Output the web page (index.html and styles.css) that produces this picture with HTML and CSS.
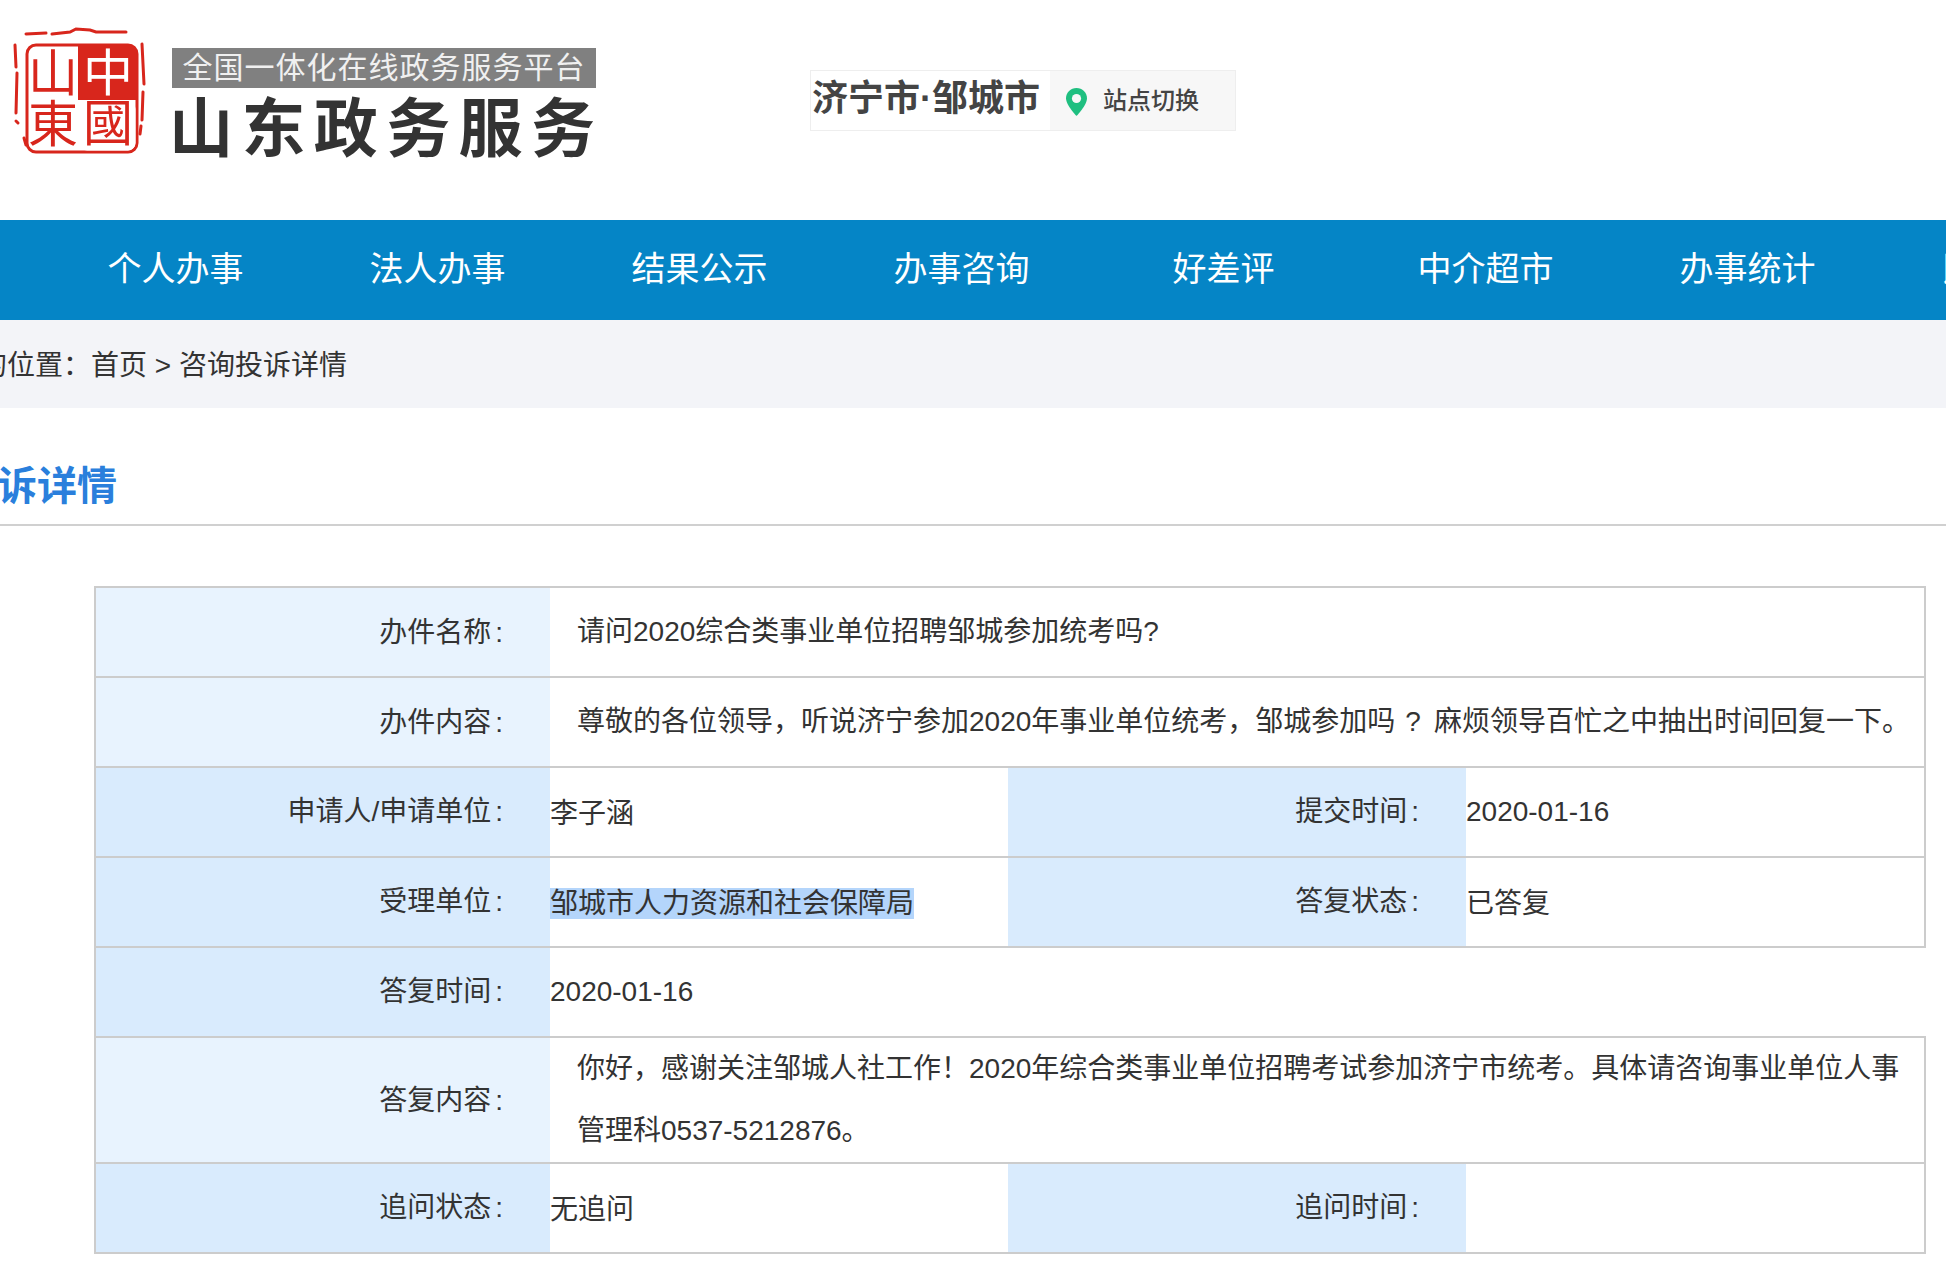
FILE: index.html
```html
<!DOCTYPE html>
<html lang="zh-CN">
<head>
<meta charset="utf-8">
<title>咨询投诉详情</title>
<link rel="stylesheet" href="styles.css">
</head>
<body>
<header class="header">
  <svg class="seal" viewBox="0 0 134 134" aria-label="山東中國">
    <g class="seal-rough">
      <path d="M14 14 l20 -1 m6 1 l18 -2 l6 -3 l14 1 l6 2 l30 0"/>
      <path d="M3 25 l1 22 m1 6 l-1 40 m0 8 l2 2"/>
      <path d="M130 24 l2 40 m-1 8 l-1 28 m-1 6 l-1 8"/>
      <path d="M12 118 l2 7 m10 2 l38 2 m50 -6 l12 -2"/>
    </g>
    <rect class="seal-frame" x="15" y="25" width="110" height="107" rx="9"/>
    <path class="seal-fill" d="M66 25 H116 a9 9 0 0 1 9 9 V80 H66 Z"/>
    <rect class="seal-box" x="68" y="82" width="55" height="48" rx="7"/>
    <text class="seal-red" x="41" y="71" text-anchor="middle">山</text>
    <text class="seal-red" x="41" y="122" text-anchor="middle">東</text>
    <text class="seal-white" x="96" y="71" text-anchor="middle">中</text>
    <text class="seal-red" x="96" y="121" text-anchor="middle">國</text>
  </svg>
  <div class="brand">
    <div class="brand-sub">全国一体化在线政务服务平台</div>
    <div class="brand-main">山东政务服务</div>
  </div>
  <div class="site">
    <div class="site-city">济宁市·邹城市</div>
    <div class="site-switch">
      <svg class="pin" viewBox="0 0 21 28" aria-hidden="true">
        <path class="pin-body" d="M10.5 0C4.7 0 0 4.6 0 10.3c0 7 10.5 17.7 10.5 17.7S21 17.3 21 10.3C21 4.6 16.3 0 10.5 0z"/>
        <circle class="pin-hole" cx="10.5" cy="10.5" r="4.6"/>
      </svg>
      <span class="switch-label">站点切换</span>
    </div>
  </div>
</header>

<nav class="nav">
  <a class="nav-item">个人办事</a>
  <a class="nav-item">法人办事</a>
  <a class="nav-item">结果公示</a>
  <a class="nav-item">办事咨询</a>
  <a class="nav-item">好差评</a>
  <a class="nav-item">中介超市</a>
  <a class="nav-item">办事统计</a>
  <a class="nav-item">民生服务</a>
</nav>

<div class="crumbs"><span class="crumbs-text">您的位置：首页 &gt; 咨询投诉详情</span></div>

<h1 class="title"><span class="title-text">咨询投诉详情</span></h1>

<table class="detail">
  <colgroup><col class="c1"><col class="c2"><col class="c3"><col class="c4"></colgroup>
  <tr>
    <th class="soft">办件名称<span class="colon">:</span></th>
    <td class="text" colspan="3">请问2020综合类事业单位招聘邹城参加统考吗?</td>
  </tr>
  <tr>
    <th class="soft">办件内容<span class="colon">:</span></th>
    <td class="text" colspan="3">尊敬的各位领导，听说济宁参加2020年事业单位统考，邹城参加吗<span class="q">?</span>麻烦领导百忙之中抽出时间回复一下。</td>
  </tr>
  <tr>
    <th>申请人/申请单位<span class="colon">:</span></th>
    <td class="val">李子涵</td>
    <th>提交时间<span class="colon">:</span></th>
    <td class="val date">2020-01-16</td>
  </tr>
  <tr>
    <th>受理单位<span class="colon">:</span></th>
    <td class="val"><span class="selected">邹城市人力资源和社会保障局</span></td>
    <th>答复状态<span class="colon">:</span></th>
    <td class="val">已答复</td>
  </tr>
  <tr>
    <th>答复时间<span class="colon">:</span></th>
    <td class="val date open" colspan="3">2020-01-16</td>
  </tr>
  <tr>
    <th class="soft">答复内容<span class="colon">:</span></th>
    <td class="text reply" colspan="3">你好，感谢关注邹城人社工作！2020年综合类事业单位招聘考试参加济宁市统考。具体请咨询事业单位人事管理科0537-5212876。</td>
  </tr>
  <tr>
    <th>追问状态<span class="colon">:</span></th>
    <td class="val">无追问</td>
    <th>追问时间<span class="colon">:</span></th>
    <td class="val"></td>
  </tr>
</table>
</body>
</html>
```

FILE: styles.css
```css
html, body {
  margin: 0;
  padding: 0;
  background: #fff;
}
body {
  width: 1946px;
  height: 1282px;
  overflow: hidden;
  font-family: "Liberation Sans", "Noto Sans CJK SC", sans-serif;
  color: #333;
}

/* header */
.header {
  height: 220px;
  display: flex;
  align-items: flex-start;
  box-sizing: border-box;
}
.seal {
  width: 134px;
  height: 134px;
  margin: 20px 0 0 12px;
  flex: none;
}
.seal-rough path {
  fill: none;
  stroke: #d8261c;
  stroke-width: 3;
  stroke-linecap: round;
}
.seal-frame {
  fill: #fff;
  stroke: #d8261c;
  stroke-width: 3;
}
.seal-fill { fill: #d8261c; }
.seal-box {
  fill: #fff;
  stroke: #fff;
}
.seal-red, .seal-white {
  font-family: "Noto Sans CJK TC", "Noto Sans CJK SC", sans-serif;
  font-size: 50px;
}
.seal-red { fill: #d8261c; }
.seal-white { fill: #fff; }

.brand {
  width: 424px;
  margin: 48px 0 0 26px;
  flex: none;
}
.brand-sub {
  height: 40px;
  line-height: 34px;
  background: #808080;
  color: #f0f0f0;
  font-family: "Noto Sans CJK SC", sans-serif;
  font-size: 30px;
  letter-spacing: 1px;
  text-align: center;
  white-space: nowrap;
}
.brand-main {
  margin: 0 0 0 -3px;
  height: 70px;
  line-height: 70px;
  font-family: "Noto Sans CJK SC", sans-serif;
  font-size: 64px;
  font-weight: 700;
  letter-spacing: 8.4px;
  color: #333;
  white-space: nowrap;
}

.site {
  margin: 70px 0 0 214px;
  width: 426px;
  height: 61px;
  box-sizing: border-box;
  border: 1px solid #eee;
  display: flex;
  flex: none;
}
.site-city {
  width: 239px;
  padding-left: 1px;
  box-sizing: border-box;
  line-height: 55px;
  font-size: 36px;
  font-weight: 700;
  color: #444;
  white-space: nowrap;
}
.site-switch {
  flex: 1;
  background: #f7f7f7;
  display: flex;
  align-items: center;
  gap: 16px;
  padding-left: 16px;
  font-family: "Noto Sans CJK SC", sans-serif;
  font-size: 24px;
  font-weight: 500;
  color: #444;
}
.switch-label { margin-bottom: 4px; }
.pin {
  width: 21px;
  height: 28px;
  margin-top: 3px;
  flex: none;
}
.pin-body { fill: #1fbf80; }
.pin-hole { fill: #f7f7f7; }

/* nav */
.nav {
  height: 100px;
  background: #0585c6;
  display: flex;
  padding-left: 44.5px;
  overflow: hidden;
}
.nav-item {
  flex: none;
  width: 262px;
  text-align: center;
  color: #fff;
  font-size: 34px;
  line-height: 98px;
  white-space: nowrap;
}

/* breadcrumb */
.crumbs {
  height: 88px;
  background: #f3f4f8;
  line-height: 91px;
  font-size: 28px;
  color: #333;
  overflow: hidden;
  white-space: nowrap;
}
.crumbs-text { margin-left: -49px; }

/* title */
.title {
  height: 116px;
  margin: 0;
  line-height: 156px;
  font-size: 40px;
  font-weight: 700;
  color: #2a7fdc;
  border-bottom: 2px solid #d0d0d0;
  overflow: hidden;
  white-space: nowrap;
}
.title-text { margin-left: -123px; }

/* table */
.detail {
  margin: 60px 0 0 94px;
  width: 1830px;
  border-collapse: collapse;
  table-layout: fixed;
  font-size: 28px;
}
.c1 { width: 455px; }
.c2, .c3 { width: 458px; }
.c4 { width: 459px; }
.detail tr { height: 90px; }
.detail th, .detail td {
  padding: 0;
  border-top: 2px solid #ccc;
  border-bottom: 2px solid #ccc;
}
.detail th {
  background: #d9ebfd;
  font-weight: 400;
  text-align: right;
  padding: 0 47px 6px 0;
  color: #333;
}
.detail th.soft {
  background: #e8f3fe;
  padding-bottom: 4px;
}
.detail tr > :first-child { border-left: 2px solid #ccc; }
.detail tr > :last-child { border-right: 2px solid #ccc; }
.detail tr > .open:last-child { border-right: none; }
.detail .val { padding-bottom: 2px; }
.detail .date { padding-bottom: 0; }
.detail .text {
  padding: 0 0 6px 27px;
  color: #333;
}
.detail .reply {
  line-height: 62px;
  padding: 0 0 0 27px;
}
.colon { margin-left: 4px; }
.q { padding: 0 13px 0 10px; }
.selected { background: #b4d5fb; }
```
